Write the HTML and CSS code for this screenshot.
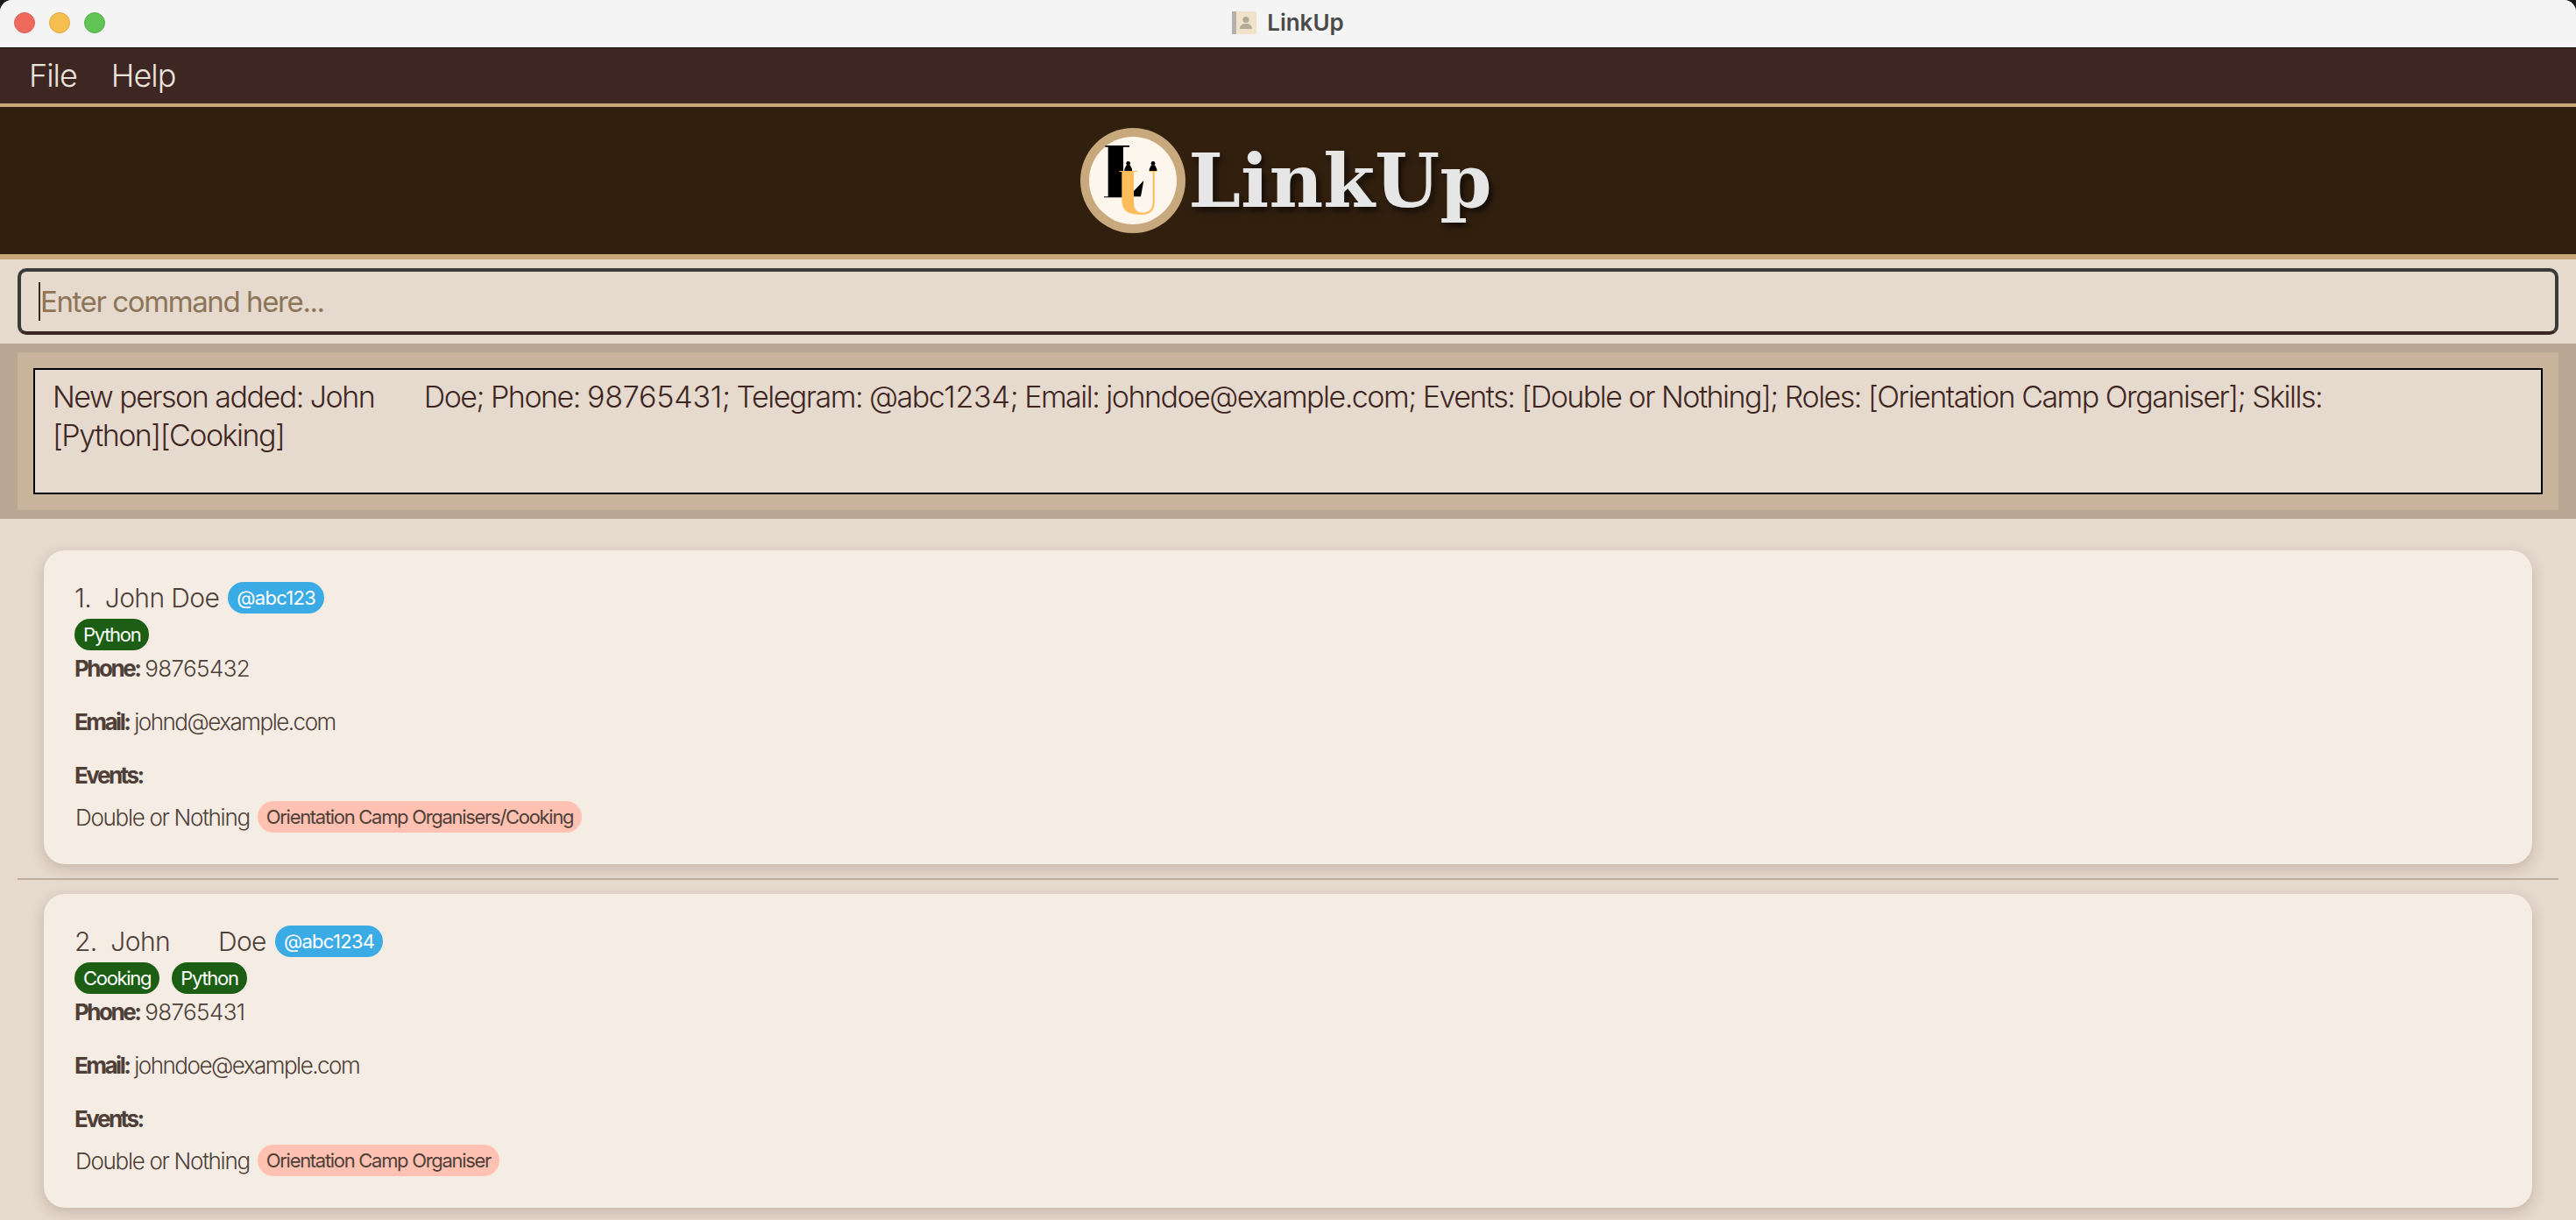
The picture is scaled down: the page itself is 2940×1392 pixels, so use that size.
FILE: index.html
```html
<!DOCTYPE html>
<html lang="en">
<head>
    <meta charset="UTF-8">
    <meta name="viewport" content="width=device-width, initial-scale=1.0">
    <title>LinkUp</title>
    <link rel="stylesheet" href="styles.css">
</head>
<body>
    <div class="window">
        <div class="titlebar">
            <div class="lights">
                <span class="light red"></span>
                <span class="light yellow"></span>
                <span class="light green"></span>
            </div>
            <div class="window-title">
                <svg class="proxy-icon" viewBox="0 0 28 26" width="28" height="26">
                    <rect x="0" y="0" width="28" height="26" rx="1.5" fill="#efe2c8"/>
                    <rect x="0" y="0" width="5" height="26" rx="1" fill="#b5b1aa"/>
                    <circle cx="16" cy="9.5" r="3.6" fill="#b3aa9a"/>
                    <path d="M9 20c0-4 3-5.500 4.800-6h4.400c1.800.5 4.800 2 4.800 6z" fill="#b3aa9a"/>
                </svg>
                <span>LinkUp</span>
            </div>
        </div>

        <div class="menubar">
            <span class="menu-item">File</span>
            <span class="menu-item">Help</span>
        </div>

        <div class="header">
            <svg class="logo" viewBox="45 48 360 360" width="120" height="120">
                <circle cx="225" cy="228" r="180" fill="#c8a97e"/>
                <circle cx="225" cy="228" r="150" fill="#fdf6ec"/>
                <!-- black L -->
                <path d="M130 108H213V113H192V283H190V286H126V283H140V113H130Z" fill="#000"/>
                <path d="M228 264L262 228L252 283H228Z" fill="#000"/>
                <!-- orange U -->
                <path d="M178 195H240V198H228V303c0 22 10 35 30 35 24 0 35-14 35-38V198H280V195H308V198H299V303c0 28-16 42-44 42-30 0-52-6-60-20-5-8-8-18-8-28V198H178Z" fill="#ffbc5a"/>
                <!-- pawns -->
                <g fill="#000">
                    <circle cx="209" cy="169" r="7"/>
                    <path d="M203 175h12l7 14v6h-26v-6z"/>
                    <circle cx="294" cy="169" r="7"/>
                    <path d="M288 175h12l7 14v6h-26v-6z"/>
                </g>
            </svg>
            <h1 class="app-name">LinkUp</h1>
        </div>

        <div class="command-area">
            <div class="command-box">
                <span class="caret"></span>
                <input class="command-input" type="text" placeholder="Enter command here...">
            </div>
        </div>

        <div class="result-area">
            <div class="result-inner">
                <div class="result-text">New person added: John       Doe; Phone: <span class="num">98765431</span>; Telegram: @abc<span class="num">1234</span>; Email: johndoe@example.com; Events: [Double or Nothing]; Roles: [Orientation Camp Organiser]; Skills: <span class="no-break">[Python][Cooking]</span></div>
            </div>
        </div>

        <div class="person-list">
            <div class="person-row">
                <div class="card">
                    <div class="name-row">
                        <span class="name">1.  John Doe</span>
                        <span class="chip handle">@abc123</span>
                    </div>
                    <div class="skills">
                        <span class="chip skill">Python</span>
                    </div>
                    <div class="field"><b>Phone:</b> <span class="num">98765432</span></div>
                    <div class="field"><b>Email:</b> johnd@example.com</div>
                    <div class="field"><b>Events:</b></div>
                    <div class="event-row">
                        <span class="event-name">Double or Nothing</span>
                        <span class="chip role">Orientation Camp Organisers/Cooking</span>
                    </div>
                </div>
            </div>
            <div class="person-row">
                <div class="card">
                    <div class="name-row">
                        <span class="name">2.  John       Doe</span>
                        <span class="chip handle">@abc1234</span>
                    </div>
                    <div class="skills">
                        <span class="chip skill">Cooking</span>
                        <span class="chip skill">Python</span>
                    </div>
                    <div class="field"><b>Phone:</b> <span class="num">98765431</span></div>
                    <div class="field"><b>Email:</b> johndoe@example.com</div>
                    <div class="field"><b>Events:</b></div>
                    <div class="event-row">
                        <span class="event-name">Double or Nothing</span>
                        <span class="chip role">Orientation Camp Organiser</span>
                    </div>
                </div>
            </div>
        </div>
    </div>
</body>
</html>
```

FILE: styles.css
```css
* {
    box-sizing: border-box;
}
html, body {
    margin: 0;
    height: 100%;
    overflow: hidden;
    background-color: #1a1a1a;
}
body {
    font-family: Inter, "Noto Sans", sans-serif;
    color: #4e4038;
}
.window {
    height: 1392px;
    background-color: #e6d9cd;
    border-radius: 14px 14px 0 0;
    overflow: hidden;
}

/* mac title bar */
.titlebar {
    height: 55px;
    background-color: #f4f4f4;
    border-bottom: 1px solid #111;
    padding-bottom: 3px;
    display: flex;
    align-items: center;
    justify-content: center;
    position: relative;
}
.lights {
    position: absolute;
    left: 16px;
    top: 14px;
    display: flex;
    gap: 16px;
}
.light {
    width: 24px;
    height: 24px;
    border-radius: 50%;
}
.red { background-color: #ee6a5f; border: 1px solid #dc5d52; }
.yellow { background-color: #f5bf4f; border: 1px solid #dfa73f; }
.green { background-color: #61c555; border: 1px solid #55ae49; }
.window-title {
    display: flex;
    align-items: center;
    gap: 12px;
    font-size: 26px;
    font-weight: 600;
    color: #4a4a4a;
}

/* menu */
.menubar {
    height: 67px;
    background-color: #3e2723;
    border-bottom: 4px solid #c8a97e;
    padding-bottom: 2px;
    display: flex;
    align-items: center;
    gap: 39px;
    padding-left: 33px;
}
.menu-item {
    font-size: 36px;
    font-weight: 300;
    letter-spacing: -1px;
    color: #e9e3dc;
}

/* logo header */
.header {
    height: 174px;
    background-color: #32200f;
    border-bottom: 6px solid #c8a97e;
    padding-right: 4px;
    display: flex;
    align-items: center;
    justify-content: center;
    gap: 3px;
}
.app-name {
    margin: 0;
    font-family: "DejaVu Serif", serif;
    font-size: 85px;
    font-weight: bold;
    color: #e6e6e6;
    text-shadow: 4px 5px 7px rgba(0,0,0,0.6);
}

/* command box */
.command-area {
    height: 96px;
    padding: 10px 20px;
}
.command-box {
    height: 76px;
    border: 4px solid #3a3a3a;
    border-bottom-color: #3e2723;
    border-radius: 10px;
    display: flex;
    align-items: center;
    padding-left: 20px;
}
.caret {
    width: 2px;
    height: 44px;
    background-color: #3e2723;
}
.command-input {
    flex: 1;
    border: none;
    outline: none;
    padding: 0;
    background: transparent;
    font-family: inherit;
    font-size: 33px;
    letter-spacing: -1.4px;
}
.command-input::placeholder {
    color: #8c7558;
    opacity: 1;
}

/* result display */
.result-area {
    height: 200px;
    padding: 10px 20px;
    background-color: #b8a792;
}
.result-inner {
    height: 180px;
    padding: 18px;
    background-color: #c8b49a;
}
.result-text {
    height: 144px;
    border: 2px solid #000;
    background-color: #e6d9cd;
    padding: 9px 20px;
    font-size: 34px;
    font-weight: 300;
    letter-spacing: -1.5px;
    line-height: 44px;
    color: #3e2723;
    white-space: pre-wrap;
}
.result-text .num {
    letter-spacing: -0.2px;
}
.no-break {
    white-space: nowrap;
}

/* person list */
.person-list {
    padding: 20px 20px 0;
}
.person-row {
    padding: 16px 30px;
    border-bottom: 2px solid #c0ad9c;
}
.person-row:last-child {
    border-bottom: none;
}
.card {
    height: 358px;
    background-color: #f5ece3;
    border-radius: 24px;
    box-shadow: 0 5px 16px rgba(60,40,20,0.2);
    padding: 36px 35px;
}
.name-row {
    display: flex;
    align-items: center;
    gap: 10px;
    height: 36px;
}
.name {
    font-size: 30px;
    font-weight: 300;
    letter-spacing: -0.6px;
    white-space: pre;
}
.chip {
    display: inline-flex;
    align-items: center;
    height: 36px;
    padding: 0 10px;
    border-radius: 18px;
    font-size: 22px;
    font-weight: 400;
    letter-spacing: -1.3px;
}
.handle {
    background-color: #3aabe4;
    color: #fff;
    letter-spacing: -0.7px;
}
.skills {
    display: flex;
    gap: 14px;
    margin-top: 6px;
    margin-bottom: 4px;
}
.skill {
    background-color: #1b5e14;
    color: #fff;
}
.field {
    height: 34px;
    margin-bottom: 27px;
    font-size: 26px;
    font-weight: 300;
    letter-spacing: -1.5px;
    line-height: 34px;
}
.field b {
    font-weight: 700;
    letter-spacing: -2.5px;
}
.field .num {
    letter-spacing: -0.6px;
}
.event-row {
    display: flex;
    align-items: center;
    gap: 9px;
    padding-left: 1px;
    margin-top: -15px;
}
.event-name {
    font-size: 26px;
    font-weight: 300;
    letter-spacing: -1.3px;
}
.role {
    background-color: #ffc2b2;
    color: #4e4038;
}
```
